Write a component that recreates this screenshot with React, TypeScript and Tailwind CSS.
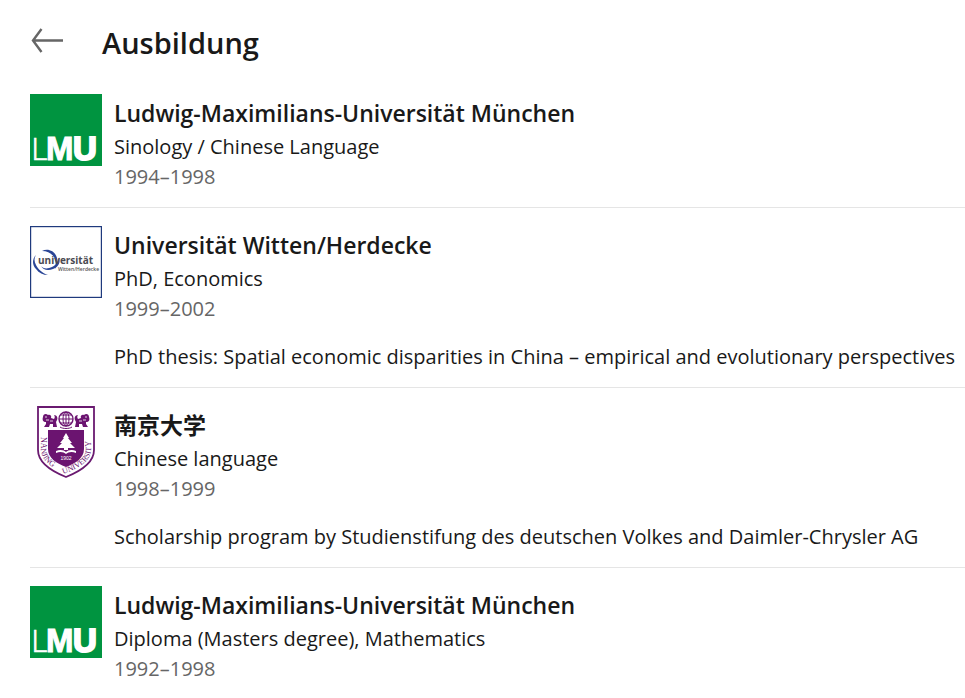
type LogoName = 'lmu' | 'witten' | 'nanjing'

type Education = {
  logo: LogoName
  school: string
  degree: string
  years: string
  description?: string
}

const EDUCATION: Education[] = [
  {
    logo: 'lmu',
    school: 'Ludwig-Maximilians-Universität München',
    degree: 'Sinology / Chinese Language',
    years: '1994–1998',
  },
  {
    logo: 'witten',
    school: 'Universität Witten/Herdecke',
    degree: 'PhD, Economics',
    years: '1999–2002',
    description:
      'PhD thesis: Spatial economic disparities in China – empirical and evolutionary perspectives',
  },
  {
    logo: 'nanjing',
    school: '南京大学',
    degree: 'Chinese language',
    years: '1998–1999',
    description:
      'Scholarship program by Studienstifung des deutschen Volkes and Daimler-Chrysler AG',
  },
  {
    logo: 'lmu',
    school: 'Ludwig-Maximilians-Universität München',
    degree: 'Diploma (Masters degree), Mathematics',
    years: '1992–1998',
  },
]

function LmuLogo() {
  return (
    <svg viewBox="0 0 72 72" className="size-[72px]" aria-hidden="true">
      <rect width="72" height="72" fill="#009440" />
      <g fill="#fff" stroke="#fff" fontFamily="'Liberation Sans', sans-serif" fontSize="33" fontWeight="700">
        <text x="1" y="66" fontFamily="Lato, sans-serif" fontWeight="300" fontSize="32" strokeWidth="0.6">
          L
        </text>
        <text x="16" y="66" strokeWidth="1">
          M
        </text>
        <text x="43" y="66" strokeWidth="2">
          U
        </text>
      </g>
    </svg>
  )
}

function WittenLogo() {
  return (
    <svg viewBox="0 0 72 72" className="size-[72px]" aria-hidden="true">
      <rect x="0.5" y="0.5" width="71" height="71" fill="#fff" stroke="#1f3a7d" strokeWidth="1.4" />
      {/* Open swirls */}
      <g fill="#2a4596">
        <path d="M6 29C2 33 2 39 6 43C9 47 13 49 18 49C12 47 8 43 6 39C4 35 4 32 6 29Z" />
        <path d="M12 25C18 22 25 25 27 32C28 36 27 40 25 43C26 38 26 34 24 31C21 27 17 25 12 25Z" />
        <path d="M11 40C13 43 18 43 22 41C26 39 29 36 29 31C31 37 28 41 23 43C18 45 13 44 11 40Z" />
      </g>
      <g fontFamily="'Open Sans', sans-serif">
        <text x="8" y="38" fontSize="10" fontWeight="700" fill="#4a4a52">
          universität
        </text>
        <text x="28" y="45" fontSize="5" fontWeight="600" fill="#555">
          Witten/Herdecke
        </text>
      </g>
    </svg>
  )
}

function Lion() {
  return (
    <g>
      <path d="M1 3C1 0 4 -1 6 1C8 0 10 2 9 4L12 5C13 4 13 2 12 1C15 1 16 4 15 6L14 8L15 13H11V10H8L7 13H2L4 10V8C1 8 0 6 1 3Z" />
      <path d="M3 3H5M4 6H7M8 7H11" stroke="#fff" strokeWidth="0.8" />
    </g>
  )
}

function NanjingLogo() {
  return (
    <svg viewBox="0 0 72 72" className="size-[72px]" aria-hidden="true">
      <path
        d="M8 1H64V44C64 57 51 65 36 71C21 65 8 57 8 44Z"
        fill="#fff"
        stroke="#6a1a70"
        strokeWidth="1.8"
      />
      <path d="M18 24H54V43C54 52 46 57 36 61C26 57 18 52 18 43Z" fill="#6b1470" />
      <g fill="#6b1470">
        <g transform="translate(12 8)">
          <Lion />
        </g>
        <g transform="translate(60 8) scale(-1 1)">
          <Lion />
        </g>
      </g>
      <g fill="none" stroke="#6b1470" strokeWidth="1">
        <circle cx="36" cy="13" r="7" strokeWidth="1.4" />
        <ellipse cx="36" cy="13" rx="3" ry="7" />
        <path d="M29 13H43M31 9H41M31 17H41M36 6V20M30 21C33 23 39 23 42 21" />
      </g>
      {/* Tree over an open book */}
      <path d="M36 27L39 32H38L42 37H40L45 42H38V44H34V42H27L32 37H30L34 32H33Z" fill="#fff" />
      <path
        d="M26 45C30 43 34 44 36 46C38 44 42 43 46 45V47C42 45 38 46 36 48C34 46 30 45 26 47Z"
        fill="#fff"
      />
      <text x="36" y="54" fontSize="5" textAnchor="middle" fill="#fff" fontFamily="'Liberation Sans', sans-serif">
        1902
      </text>
      <path id="motto-left" d="M11 31V43C11 53 19 60 32 66" fill="none" />
      <path id="motto-right" d="M33 68C50 62 61 55 61 43V20" fill="none" />
      <g fontSize="8" fill="#6b1470" fontFamily="'Liberation Serif', serif">
        <text>
          <textPath href="#motto-left">NANJING</textPath>
        </text>
        <text>
          <textPath href="#motto-right">UNIVERSITY</textPath>
        </text>
      </g>
    </svg>
  )
}

const LOGOS = { lmu: LmuLogo, witten: WittenLogo, nanjing: NanjingLogo }

function EducationItem({ item }: { item: Education }) {
  const Logo = LOGOS[item.logo]
  return (
    <li className="flex gap-3 border-b border-[#e5e5e5] pt-[18px] pb-[15px] last:border-b-0">
      <div className="shrink-0">
        <Logo />
      </div>
      <div className="min-w-0 flex-1 text-xl leading-[30px]">
        <h2 className="text-[23px] leading-[38px] font-semibold">{item.school}</h2>
        <p>{item.degree}</p>
        <p className="text-[#666]">{item.years}</p>
        {item.description && <p className="mt-[18px]">{item.description}</p>}
      </div>
    </li>
  )
}

export default function App() {
  return (
    <main className="bg-white pl-[30px] font-['Open_Sans','Noto_Sans_CJK_SC',sans-serif] text-[#191919]">
      <header className="flex items-center gap-[38px] pt-3 pb-0.5">
        <button type="button" aria-label="Zurück" className="cursor-pointer pb-1">
          <svg viewBox="0 0 34 26" className="h-[26px] w-[34px]" fill="none" stroke="#666" strokeWidth="2.4">
            <path d="M33 12.500H3M11.500 1L3 12.500L11.500 24" />
          </svg>
        </button>
        <h1 className="text-[29px] leading-[62px] font-semibold">Ausbildung</h1>
      </header>
      <ul>
        {EDUCATION.map((item) => (
          <EducationItem key={item.years} item={item} />
        ))}
      </ul>
    </main>
  )
}
